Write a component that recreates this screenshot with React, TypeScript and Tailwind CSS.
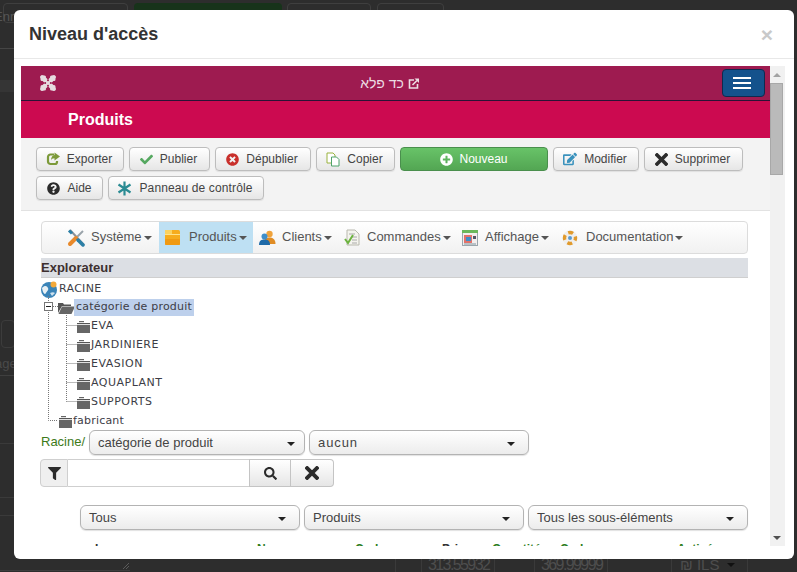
import React from "react";
import { FaCheck, FaTimesCircle, FaPlusCircle, FaEdit, FaQuestionCircle, FaFilter, FaSearch } from "react-icons/fa";

const Caret = ({ cls = "border-t-[#444]" }: { cls?: string }) => (
  <span className={"inline-block w-0 h-0 border-x-[4px] border-x-transparent border-t-[4px] " + cls} />
);

const btnBase =
  "h-[24px] flex items-center justify-center gap-[7px] rounded-[4px] border border-[#bdbdbd] bg-gradient-to-b from-white to-[#e6e6e6] text-[12px] text-[#444] shadow-[0_1px_1px_rgba(0,0,0,0.08)]";
const btn = btnBase + " pr-[2px]";

const BoldX = ({ size = 13 }: { size?: number }) => (
  <svg width={size} height={size} viewBox="0 0 13 13" fill="none" stroke="#2b2b2b" strokeWidth="3.600">
    <path d="M2 2l9 9M11 2l-9 9" strokeLinecap="square" />
  </svg>
);

const ExportIcon = () => (
  <svg width="14" height="14" viewBox="0 0 14 14" fill="none">
    <path d="M8 2.500H4.500A2.500 2.500 0 0 0 2 5v4.500A2.500 2.500 0 0 0 4.500 12H9a2 2 0 0 0 2-2V9" stroke="#7c9a3a" strokeWidth="2.200" />
    <path d="M8.500 0.500L14 4.500 8.500 8.500V6.300C6.500 6.300 5.500 7 5 8.500 5 5 6.500 3.200 8.500 3z" fill="#7c9a3a" />
  </svg>
);

const LinkOut = () => (
  <svg width="11" height="11" viewBox="0 0 11 11" fill="none">
    <path d="M6 2H1.500v8h8V6" stroke="#ecdde3" strokeWidth="1.600" />
    <path d="M4.500 7L9 2.500" stroke="#ecdde3" strokeWidth="1.600" />
    <path d="M6.500 0.500H11V5z" fill="#ecdde3" />
  </svg>
);

const Copy = () => (
  <svg width="14" height="15" viewBox="0 0 14 15" fill="none">
    <path d="M1 1h6l2 2v8H1z" fill="#fff" stroke="#9ab23e" />
    <path d="M5.500 5h5l2.500 2.500v6.500h-7.500z" fill="#fff" stroke="#4fa36a" />
  </svg>
);

const Star = () => (
  <svg width="15" height="15" viewBox="0 0 15 15" stroke="#2a8b93" strokeWidth="2.200" fill="none">
    <path d="M7.500 0.500v14M1.500 3.500l12 8M13.500 3.500l-12 8" />
  </svg>
);

const Joomla = () => (
  <svg width="18" height="18" viewBox="0 0 18 18" fill="none">
    <g stroke="#e6dbdf" strokeLinecap="round">
      <path d="M4 4l10 10M14 4L4 14" strokeWidth="4.600" />
      <path d="M2.500 3h3M3 2.500v3M15.500 3h-3M15 2.500v3M2.500 15h3M3 15.500v-3M15.500 15h-3M15 15.500v-3" strokeWidth="3" />
    </g>
    <g fill="#9e1b50">
      <circle cx="9" cy="6.200" r="1" />
      <circle cx="9" cy="11.800" r="1" />
      <circle cx="6.200" cy="9" r="1" />
      <circle cx="11.800" cy="9" r="1" />
    </g>
  </svg>
);

const Tools = () => (
  <svg width="18" height="18" viewBox="0 0 18 18" fill="none">
    <path d="M3 1l14 15" stroke="#8a9299" strokeWidth="2" />
    <path d="M16 2L9 9" stroke="#9aa3aa" strokeWidth="2" />
    <path d="M9 9l-6 6" stroke="#e8892b" strokeWidth="4" strokeLinecap="round" />
    <path d="M11 11l5 5" stroke="#2b7fa6" strokeWidth="3.500" strokeLinecap="round" />
    <path d="M2 1.500l3 3" stroke="#2b7fa6" strokeWidth="3" />
  </svg>
);

const Box = () => (
  <svg width="15" height="17" viewBox="0 0 15 17">
    <rect x="0" y="1" width="15" height="15" rx="1.500" fill="#f6ac1d" />
    <rect x="0" y="1" width="7" height="4" fill="#fbd25f" />
    <rect x="0" y="5" width="15" height="1" fill="#ffe28a" />
    <rect x="0" y="10" width="15" height="6" rx="1" fill="#f09a12" />
  </svg>
);

const People = () => (
  <svg width="17" height="16" viewBox="0 0 17 16">
    <circle cx="10.500" cy="4" r="3.200" fill="#f0a33c" />
    <path d="M5 14c0-5 2.500-6.500 5.500-6.500S16.500 9 16.500 14z" fill="#e08c24" />
    <circle cx="5.500" cy="6.500" r="3" fill="#3f8ec9" />
    <path d="M0 15c0-4.500 2.500-5.500 5.500-5.500s5.500 1 5.500 5.500z" fill="#1f6aa8" />
  </svg>
);

const Doc = () => (
  <svg width="16" height="17" viewBox="0 0 16 17">
    <path d="M3 1h8l4 4v11H3z" fill="#f4f4ee" stroke="#b9b9ae" />
    <path d="M5 5h6M7 8h6M8 11h5M8 14h5" stroke="#aaa" />
    <path d="M1 10l3 4 5-8" stroke="#6cb33f" strokeWidth="2" fill="none" />
  </svg>
);

const WindowIcon = () => (
  <svg width="16" height="16" viewBox="0 0 16 16">
    <rect x="0.500" y="0.500" width="15" height="15" fill="#f3eeee" stroke="#9aa6ad" />
    <rect x="0" y="0" width="16" height="3" fill="#6cb85c" />
    <rect x="2" y="5" width="8" height="8" fill="#e2726a" />
    <rect x="4" y="7" width="5" height="4" fill="#3f8ec9" />
    <rect x="11" y="6" width="3" height="3" fill="#556" />
    <rect x="2" y="13" width="12" height="2" fill="#b9c2c7" />
  </svg>
);

const Buoy = () => (
  <svg width="16" height="16" viewBox="0 0 16 16" fill="none">
    <circle cx="8" cy="8" r="7.500" fill="#efefef" />
    <circle cx="8" cy="8" r="5.500" stroke="#e19a2c" strokeWidth="3.400" strokeDasharray="5 3.640" strokeDashoffset="2.500" />
    <circle cx="8" cy="8" r="2" fill="#5b9bd0" />
  </svg>
);

const Folder = () => (
  <svg width="13" height="13" viewBox="0 0 13 13" className="shrink-0 mr-[1px]">
    <path d="M2 1h5v1.200H2z" fill="#666" />
    <rect x="0" y="3" width="13" height="1" fill="#555" />
    <rect x="0" y="4.800" width="13" height="8.200" fill="#666" />
  </svg>
);

const OpenFolder = () => (
  <svg width="17" height="13" viewBox="0 0 17 13" className="shrink-0">
    <path d="M0 2h5l1 1.500h7V5H4L0 12z" fill="#555" />
    <path d="M4 5.500h13l-3.500 7.500H0.500z" fill="#666" />
  </svg>
);

const Globe = () => (
  <svg width="16" height="17" viewBox="0 0 16 17">
    <circle cx="8" cy="9" r="8" fill="#3a84b8" />
    <path d="M1 7c3-3 5-2 6 0s-1 3-2 5-3 1-4-5z" fill="#e8f0f4" />
    <path d="M9 12c2-1 4-1 5 0l-3 3z" fill="#cfe2ee" />
    <circle cx="12.500" cy="3.500" r="3" fill="#f3a93a" />
  </svg>
);

const Sel = ({ w, label, caretGap = "pr-[9px]", labelCls = "" }: { w: string; label: string; caretGap?: string; labelCls?: string }) => (
  <div
    className={
      w + " " + caretGap +
      " h-[25px] flex items-center justify-between pl-[8px] rounded-[6px] border border-[#b3b3b3] bg-gradient-to-b from-white to-[#ececec] text-[13px] text-[#444] shadow-[0_1px_1px_rgba(0,0,0,0.12)]"
    }
  >
    <span className={labelCls}>{label}</span>
    <Caret cls="border-t-[#222] mt-[3px]" />
  </div>
);

const MenuItem = ({ icon, label, cls, gap }: { icon: React.ReactNode; label: string; cls: string; gap: string }) => (
  <div className={"h-full flex items-center " + cls}>
    <span className={"flex items-center justify-start " + gap}>{icon}</span>
    <span className="text-[13px] text-[#555] -mt-[2px]">{label}</span>
    <Caret cls="border-t-[#555] ml-[2px] mt-[1px]" />
  </div>
);

const TreeRow = ({ h = "h-[19px]", pl, icon, label, cls = "tracking-[0.5px]" }: { h?: string; pl: string; icon: React.ReactNode; label: string; cls?: string }) => (
  <div className={h + " flex items-center " + pl}>
    {icon}
    <span className={"text-[11px] text-[#3d3d46] font-['DejaVu_Sans','Liberation_Sans',sans-serif] " + cls}>{label}</span>
  </div>
);

export default function App() {
  return (
    <div className="relative w-[797px] h-[572px] overflow-hidden bg-[#2d2d2d] font-['Liberation_Sans',Arial,sans-serif]">
      {/* dimmed page behind the dialog */}
      <div className="absolute left-[3px] top-[3px] w-[125px] h-[20px] rounded-[4px] border border-[#3f3f3f]" />
      <div className="absolute left-[134px] top-[3px] w-[148px] h-[20px] rounded-[4px] bg-[#17331a]" />
      <div className="absolute left-[287px] top-[3px] w-[84px] h-[20px] rounded-[4px] border border-[#3f3f3f]" />
      <div className="absolute left-[377px] top-[3px] w-[67px] h-[20px] rounded-[4px] border border-[#3f3f3f]" />
      <div className="absolute left-[-6px] top-[7px] text-[13px] text-[#555]">Enr</div>
      <div className="absolute left-0 top-[48px] w-[14px] h-px bg-[#454545]" />
      <div className="absolute left-0 top-[80px] w-[14px] h-[12px] bg-[#353535]" />
      <div className="absolute left-[1px] top-[320px] w-[14px] h-[28px] rounded-[4px] border border-[#3c3c3c]" />
      <div className="absolute left-[-5px] top-[354px] text-[13px] text-[#4a4a4a]">age</div>
      <div className="absolute left-0 top-[375px] w-[14px] h-px bg-[#3f3f3f]" />
      <div className="absolute left-0 top-[443px] w-[14px] h-px bg-[#3a3a3a]" />
      <div className="absolute left-0 top-[497px] w-[14px] h-px bg-[#3a3a3a]" />
      <div className="absolute left-0 top-[515px] w-[14px] h-px bg-[#3a3a3a]" />

      <div className="absolute left-0 top-[570px] w-[130px] h-px bg-[#3d3d3d]" />
      <svg className="absolute left-[122px] top-[562px]" width="8" height="8" fill="none" stroke="#5a5a5a">
        <path d="M1 7l6-6M4 7l3-3" />
      </svg>
      <div className="absolute left-[395px] top-[559px] w-px h-[13px] bg-[#3a3a3a]" />
      <div className="absolute left-[421px] top-[559px] w-px h-[13px] bg-[#3a3a3a]" />
      <div className="absolute left-[494px] top-[559px] w-px h-[13px] bg-[#3a3a3a]" />
      <div className="absolute left-[534px] top-[559px] w-px h-[13px] bg-[#3a3a3a]" />
      <div className="absolute left-[607px] top-[559px] w-px h-[13px] bg-[#3a3a3a]" />
      <div className="absolute left-[671px] top-[559px] w-px h-[13px] bg-[#3a3a3a]" />
      <div className="absolute left-[747px] top-[559px] w-px h-[13px] bg-[#3a3a3a]" />
      <span className="absolute left-[428px] top-[556px] text-[16px] leading-[18px] tracking-[-1.6px] text-[#4e4e4e]">313.55932</span>
      <span className="absolute left-[541px] top-[556px] text-[16px] leading-[18px] tracking-[-1.6px] text-[#4e4e4e]">369.99999</span>
      <span className="absolute left-[680px] top-[556px] text-[15px] leading-[18px] text-[#4e4e4e]">₪ ILS</span>
      <span className="absolute left-[727px] top-[563px] flex"><Caret cls="border-t-[#111]" /></span>

      {/* dialog */}
      <div className="absolute left-[14px] top-[10px] w-[780px] h-[549px] rounded-[6px] bg-white flex flex-col">
        <div className="h-[49px] shrink-0 border-b border-[#e8e8e8] flex items-center justify-between pl-[15px] pr-[21px]">
          <h1 className="text-[18px] font-bold text-[#333] leading-none">Niveau d'accès</h1>
          <span className="text-[21px] font-bold text-[#c9c9c9] leading-none">×</span>
        </div>

        <div className="mt-[7px] ml-[7px] w-[764px] h-[480px] flex overflow-hidden">
          {/* framed page */}
          <div className="w-[749px] h-full shrink-0 flex flex-col overflow-hidden">
            <div className="relative h-[35px] shrink-0 bg-[#9e1b50] border-b-[1px] border-[#2a1236] flex items-center pl-[18px]">
              <Joomla />
              <div className="flex-1 flex justify-center items-center gap-[4px] text-[14px] text-[#ecdde3]">
                <span dir="rtl">כד פלא</span>
                <LinkOut />
              </div>
              <div className="mr-[5px] w-[43px] h-[28px] rounded-[4px] bg-[#14528c] border border-[#0e2a4f] flex flex-col items-center justify-center gap-[3px] pr-[3px]">
                <span className="w-[18px] h-[2px] bg-white" />
                <span className="w-[18px] h-[2px] bg-white" />
                <span className="w-[18px] h-[2px] bg-white" />
              </div>
            </div>
            <div className="h-[37px] shrink-0 bg-[#cc0a50] pl-[47px] flex items-center text-[16px] font-bold text-white">Produits</div>

            <div className="h-[73px] shrink-0 bg-[#f3f3f3] border-b border-[#e2e2e2] pl-[15px] pt-[9px] flex flex-col gap-[5px]">
              <div className="flex gap-[5px]">
                <div className={btn + " w-[88px]"}><ExportIcon />Exporter</div>
                <div className={btn + " w-[81px]"}><FaCheck size={13} className="text-[#55a860]" />Publier</div>
                <div className={btn + " w-[96px]"}><FaTimesCircle size={13} className="text-[#c9302c]" />Dépublier</div>
                <div className={btn + " w-[79px]"}><Copy />Copier</div>
                <div className="w-[148px] h-[24px] flex items-center justify-center gap-[6px] rounded-[4px] border border-[#4a8f4d] bg-gradient-to-b from-[#68c368] to-[#53a653] text-[12px] text-white">
                  <FaPlusCircle size={13} />Nouveau
                </div>
                <div className={btn + " w-[86px]"}><FaEdit size={14} className="text-[#3a92bd]" />Modifier</div>
                <div className={btn + " w-[99px]"}><BoldX />Supprimer</div>
              </div>
              <div className="flex gap-[5px]">
                <div className={btnBase + " w-[67px]"}><FaQuestionCircle size={13} className="text-[#2b2b2b]" />Aide</div>
                <div className={btn + " w-[156px] tracking-[0.12px] gap-[6px]"}><Star />Panneau de contrôle</div>
              </div>
            </div>

            <div className="flex-1 min-h-0 bg-white pt-[10px] pl-[20px] pr-[22px] flex flex-col">
              <div className="h-[33px] shrink-0 rounded-[4px] border border-[#dcdcdc] bg-gradient-to-b from-white to-[#f1f1f1] flex items-center pl-[25px]">
                <MenuItem icon={<Tools />} gap="w-[24px]" label="Système" cls="w-[92px]" />
                <MenuItem icon={<Box />} gap="w-[24px]" label="Produits" cls="w-[94px] pl-[6px] bg-[#bee0f3]" />
                <MenuItem icon={<People />} gap="w-[23px]" label="Clients" cls="w-[91px] pl-[6px]" />
                <MenuItem icon={<Doc />} gap="w-[23px]" label="Commandes" cls="w-[118px]" />
                <MenuItem icon={<WindowIcon />} gap="w-[23px]" label="Affichage" cls="w-[100px]" />
                <MenuItem icon={<Buoy />} gap="w-[24px]" label="Documentation" cls="" />
              </div>

              <div className="mt-[4px] h-[20px] shrink-0 bg-[#dcdfe4] border-b border-[#cfcfcf] flex items-center text-[13px] font-bold text-[#3d3030]">Explorateur</div>

              <div className="relative mt-[2px] shrink-0 h-[150px]">
                <svg className="absolute left-0 -top-[1px]" width="60" height="151" fill="none" stroke="#777" strokeDasharray="1 1">
                  <path d="M7.500 17v124.500H17" />
                  <path d="M25.500 36v86.500" />
                  <path d="M25.500 46.500H36M25.500 65.500H36M25.500 84.500H36M25.500 103.500H36M25.500 122.500H36" />
                  <path d="M12 27.500h5" />
                </svg>
                <TreeRow h="h-[18px]" pl="pl-0" icon={<span className="mr-[2px]"><Globe /></span>} label="RACINE" cls="tracking-[0.3px]" />
                <div className="relative">
                  <span className="absolute left-[3px] top-[4px] w-[9px] h-[9px] border border-[#777] bg-white flex items-center justify-center">
                    <span className="w-[5px] h-px bg-[#222]" />
                  </span>
                  <TreeRow
                    pl="pl-[17px]"
                    icon={<OpenFolder />}
                    label="catégorie de produit"
                    cls="tracking-[0.2px] bg-[#bdd0ec] px-[2px] -ml-[1px]"
                  />
                </div>
                <TreeRow pl="pl-[36px]" icon={<Folder />} label="EVA" />
                <TreeRow pl="pl-[36px]" icon={<Folder />} label="JARDINIERE" />
                <TreeRow pl="pl-[36px]" icon={<Folder />} label="EVASION" />
                <TreeRow pl="pl-[36px]" icon={<Folder />} label="AQUAPLANT" />
                <TreeRow pl="pl-[36px]" icon={<Folder />} label="SUPPORTS" />
                <TreeRow pl="pl-[18px]" icon={<Folder />} label="fabricant" cls="tracking-[0.2px]" />
              </div>

              <div className="shrink-0 flex items-center gap-[4px] h-[25px]">
                <span className="w-[44px] text-[13px] text-[#3d7a1a] -mt-[2px]">Racine/</span>
                <Sel w="w-[216px]" label="catégorie de produit" />
                <Sel w="w-[220px]" label="aucun" caretGap="pr-[13px]" labelCls="tracking-[0.9px]" />
              </div>

              <div className="mt-[4px] shrink-0 flex h-[28px] w-[294px] -ml-px">
                <div className="w-[28px] rounded-l-[4px] border border-[#cfcfcf] bg-[#efefef] flex items-center justify-center">
                  <FaFilter size={13} className="text-[#2b2b2b]" />
                </div>
                <div className="w-[181px] border-y border-[#cfcfcf] bg-white" />
                <div className="w-[42px] border border-[#c4c4c4] bg-gradient-to-b from-white to-[#e6e6e6] flex items-center justify-center">
                  <FaSearch size={13} className="text-[#2b2b2b]" />
                </div>
                <div className="w-[43px] rounded-r-[4px] border border-l-0 border-[#c4c4c4] bg-gradient-to-b from-white to-[#e6e6e6] flex items-center justify-center">
                  <BoldX size={14} />
                </div>
              </div>

              <div className="mt-[18px] ml-[39px] shrink-0 flex gap-[4px]">
                <Sel w="w-[220px]" label="Tous" caretGap="pr-[13px]" />
                <Sel w="w-[220px]" label="Produits" caretGap="pr-[13px]" />
                <Sel w="w-[220px]" label="Tous les sous-éléments" caretGap="pr-[13px]" />
              </div>

              <div className="relative mt-[10px] shrink-0 h-[14px] text-[12px] font-bold text-[#2e7d1e]">
                <span className="absolute left-[54px] top-0 text-[#333]">Image</span>
                <span className="absolute left-[216px] top-0">Nom</span>
                <span className="absolute left-[314px] top-0">Code</span>
                <span className="absolute left-[401px] top-0 text-[#333]">Prix</span>
                <span className="absolute left-[451px] top-0">Quantité</span>
                <span className="absolute left-[519px] top-0">Code</span>
                <span className="absolute left-[636px] top-0">Activé</span>
              </div>
            </div>
          </div>

          {/* scrollbar */}
          <div className="w-[15px] h-full shrink-0 bg-[#f1f1f1] flex flex-col items-start">
            <div className="h-[17px] w-[13px] flex items-center justify-center">
              <span className="w-0 h-0 border-x-[4px] border-x-transparent border-b-[4px] border-b-[#a3a3a3]" />
            </div>
            <div className="h-[92px] w-[13px] bg-[#bababa] border border-[#a8a8a8]" />
            <div className="flex-1" />
            <div className="h-[17px] w-[13px] flex items-center justify-center">
              <span className="w-0 h-0 border-x-[4px] border-x-transparent border-t-[4px] border-t-[#505050]" />
            </div>
          </div>
        </div>
      </div>
    </div>
  );
}
